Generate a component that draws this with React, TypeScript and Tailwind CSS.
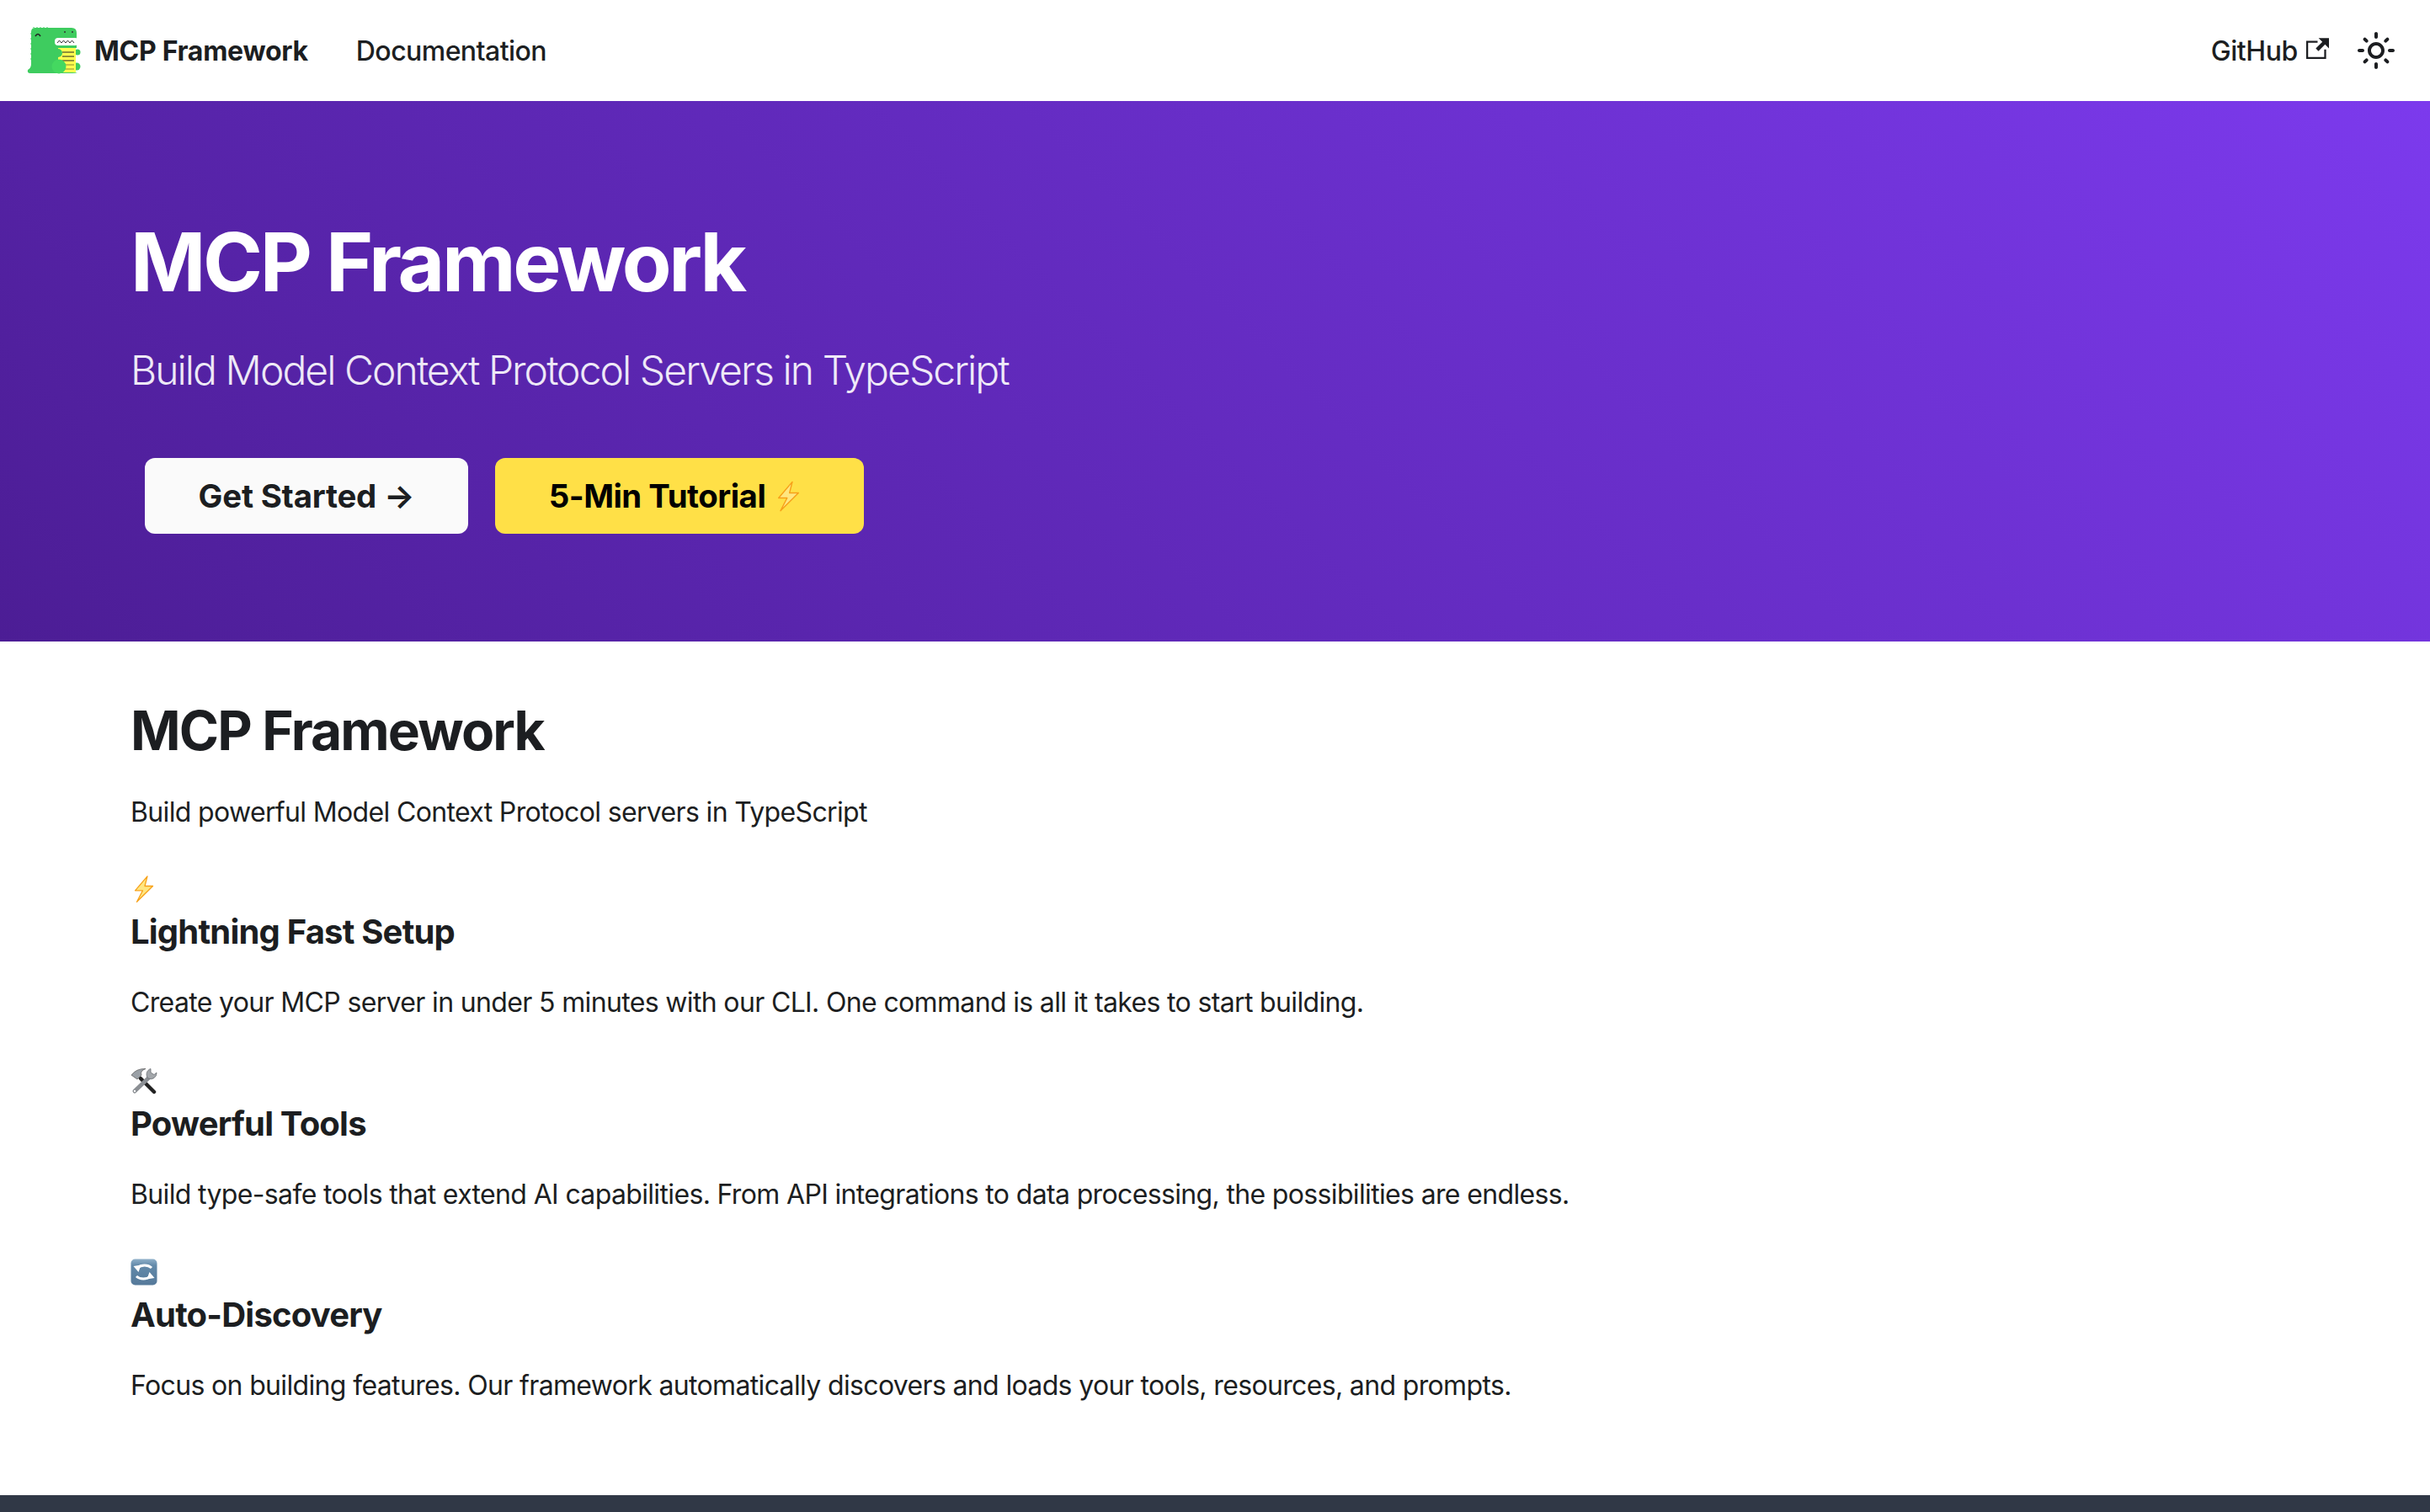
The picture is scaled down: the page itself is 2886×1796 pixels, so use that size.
const sunPath =
  "M12,9c1.65,0,3,1.35,3,3s-1.35,3-3,3s-3-1.35-3-3S10.35,9,12,9 M12,7c-2.76,0-5,2.24-5,5s2.24,5,5,5s5-2.24,5-5 S14.76,7,12,7L12,7z M2,13l2,0c0.55,0,1-0.45,1-1s-0.45-1-1-1l-2,0c-0.55,0-1,0.45-1,1S1.45,13,2,13z M20,13l2,0c0.55,0,1-0.45,1-1 s-0.45-1-1-1l-2,0c-0.55,0-1,0.45-1,1S19.45,13,20,13z M11,2v2c0,0.55,0.45,1,1,1s1-0.45,1-1V2c0-0.55-0.45-1-1-1S11,1.45,11,2z M11,20v2c0,0.55,0.45,1,1,1s1-0.45,1-1v-2c0-0.55-0.45-1-1-1C11.45,19,11,19.45,11,20z M5.99,4.58c-0.39-0.39-1.03-0.39-1.41,0 c-0.39,0.39-0.39,1.03,0,1.41l1.06,1.06c0.39,0.39,1.03,0.39,1.41,0s0.39-1.03,0-1.41L5.99,4.58z M18.36,16.95 c-0.39-0.39-1.03-0.39-1.41,0c-0.39,0.39-0.39,1.03,0,1.41l1.06,1.06c0.39,0.39,1.03,0.39,1.41,0c0.39-0.39,0.39-1.03,0-1.41 L18.36,16.95z M19.42,5.99c0.39-0.39,0.39-1.03,0-1.41c-0.39-0.39-1.03-0.39-1.41,0l-1.06,1.06c-0.39,0.39-0.39,1.03,0,1.41 s1.03,0.39,1.41,0L19.42,5.99z M7.05,18.36c0.39-0.39,0.39-1.03,0-1.41c-0.39-0.39-1.03-0.39-1.41,0l-1.06,1.06 c-0.39,0.39-0.39,1.03,0,1.41s1.03,0.39,1.41,0L7.05,18.36z";

function Logo() {
  return (
    <svg viewBox="0 0 64 56" className="w-[64px] h-[56px] shrink-0">
      <circle cx="60" cy="30" r="3.500" fill="#3ecc5f" />
      <circle cx="59" cy="47" r="4.500" fill="#3ecc5f" />
      <path d="M5 6 Q5 1 10 1 H53 Q59 1 59 7 V25 H38 V54 H60 Q58 55 54 55 H4 Q0 55 1 51 Q5 49 5 44 Z" fill="#3ecc5f" />
      <path d="M8 1v-1M12 1v-1M16 1v-1M20 1v-1M24 1v-1M5 8h-1M5 14h-1M5 20h-1M5 26h-1M5 32h-1M5 38h-1" stroke="#3ecc5f" strokeWidth="1" />
      <rect x="33" y="13" width="28" height="9" rx="4" fill="#fff" />
      <path d="M36 19 l2.500 -3 l2.500 3 l2.500 -3 l2.500 3 l2.500 -3 l2.500 3 l2.500 -3 l2.500 3" fill="none" stroke="#333" strokeWidth="1" />
      <path d="M10 11 Q13 6 16 11" fill="none" stroke="#222" strokeWidth="1.600" />
      <circle cx="45" cy="6" r="1" fill="#333" />
      <circle cx="54" cy="6" r="1" fill="#333" />
      <path d="M37 25 H58 V54 H37 Z" fill="#ffff50" />
      <path d="M42 30h14M42 35h14M42 40h14" stroke="#222" strokeWidth="1.200" />
      <path d="M44 45h12M44 50h12" stroke="#8a8a30" strokeWidth="1.200" />
      <circle cx="37" cy="31" r="5" fill="#3ecc5f" />
      <circle cx="38" cy="47" r="8.500" fill="#44d860" />
    </svg>
  );
}

function Bolt({ className }: { className: string }) {
  return (
    <svg viewBox="0 0 24 32" className={className}>
      <path
        d="M16 0.800 L1.500 17.800 H10.500 L3.500 31.300 L22.500 12.500 H13 Z"
        fill="#ffe680"
        stroke="#f7a11a"
        strokeWidth="1.300"
        strokeLinejoin="round"
      />
    </svg>
  );
}

function Tools() {
  return (
    <svg viewBox="0 0 32 32" className="w-[32px] h-[32px]">
      <path d="M12 13 L28 29" stroke="#222" strokeWidth="4.500" strokeLinecap="round" />
      <path d="M24 10 L5 28" stroke="#8b8f94" strokeWidth="5" strokeLinecap="round" />
      <circle cx="5" cy="28" r="1.200" fill="#fff" />
      <path d="M1 9 Q7 1 18 1.500 Q11 4 13 9 L8 14 Z" fill="#9aa0a6" stroke="#666" strokeWidth="0.800" />
      <path d="M21 13 A7 7 0 0 1 24 1.500 L24 6 L28 8.500 L31 6 A7 7 0 0 1 21 13 Z" fill="#a3a7ab" stroke="#6b6f73" strokeWidth="0.800" />
    </svg>
  );
}

function Refresh() {
  return (
    <svg viewBox="0 0 32 32" className="w-[32px] h-[32px]">
      <defs>
        <linearGradient id="tile" x1="0" y1="0" x2="0" y2="1">
          <stop offset="0" stopColor="#8fb0c9" />
          <stop offset="0.250" stopColor="#6289a9" />
          <stop offset="1" stopColor="#55799a" />
        </linearGradient>
      </defs>
      <rect x="0.500" y="0.500" width="31" height="31" rx="5" fill="url(#tile)" />
      <path d="M25 11 A10.500 8 0 0 0 8.500 11" fill="none" stroke="#fff" strokeWidth="3" />
      <path d="M3.500 9 L12.500 7.500 L9.500 16 Z" fill="#fff" />
      <path d="M7 21 A10.500 8 0 0 0 23.500 21" fill="none" stroke="#fff" strokeWidth="3" />
      <path d="M28.500 23 L19.500 24.500 L22.500 16 Z" fill="#fff" />
    </svg>
  );
}

const features = [
  {
    icon: <Bolt className="w-[24px] h-[32px] ml-[4px]" />,
    title: "Lightning Fast Setup",
    text: "Create your MCP server in under 5 minutes with our CLI. One command is all it takes to start building.",
  },
  {
    icon: <Tools />,
    title: "Powerful Tools",
    text: "Build type-safe tools that extend AI capabilities. From API integrations to data processing, the possibilities are endless.",
  },
  {
    icon: <Refresh />,
    title: "Auto-Discovery",
    text: "Focus on building features. Our framework automatically discovers and loads your tools, resources, and prompts.",
  },
];

export default function App() {
  return (
    <div className="min-h-[1796px] flex flex-col bg-white text-[#1c1e21] text-[32px] leading-[1.65] tracking-[-0.65px] font-['Inter',sans-serif]">
      <nav className="h-[120px] flex items-center justify-between pl-[32px] pr-[40px]">
        <div className="flex items-center">
          <Logo />
          <span className="ml-[16px] mt-[3px] font-bold tracking-[-0.28px]">MCP Framework</span>
          <span className="ml-[57px] mt-[3px] font-medium tracking-[-0.55px]">Documentation</span>
        </div>
        <div className="flex items-center">
          <span className="mt-[3px] font-medium tracking-[-0.4px]">GitHub</span>
          <svg viewBox="0 0 24 24" className="w-[27px] h-[27px] ml-[10px] mb-[4px]" fill="currentColor">
            <path d="M21 13v10h-21v-19h12v2h-10v15h17v-8h2zm3-12h-10.988l4.035 4-6.977 7.07 2.828 2.828 6.977-7.07 4.125 4.172v-11z" />
          </svg>
          <svg viewBox="0 0 24 24" className="w-[48px] h-[48px] ml-[32px]" fill="currentColor">
            <path d={sunPath} />
          </svg>
        </div>
      </nav>

      <header className="h-[642px] bg-[linear-gradient(45deg,#4c1d95,#7c3aed)] px-[155px] pt-[131px] text-white">
        <h1 className="text-[96px] leading-[1.25] font-bold tracking-[-3.35px]">MCP Framework</h1>
        <p className="mt-[35px] text-[48px] leading-[1.4] font-light text-white/90 tracking-[-1.94px]">
          Build Model Context Protocol Servers in TypeScript
        </p>
        <div className="mt-[71px] flex gap-[32px] pl-[17px]">
          <a className="h-[90px] w-[384px] flex items-center justify-center rounded-[12px] bg-[#fafafa] text-[#1c1e21] text-[38.400px] font-bold tracking-[-0.2px]">
            Get Started →
          </a>
          <a className="h-[90px] w-[438px] flex items-center justify-center gap-[14px] pr-[12px] rounded-[12px] bg-[#ffe047] text-black text-[38.400px] font-bold tracking-[-0.5px]">
            5-Min Tutorial
            <Bolt className="w-[27px] h-[37px]" />
          </a>
        </div>
      </header>

      <main className="flex-1 px-[155px] pt-[66px]">
        <h2 className="text-[64px] leading-[1.25] font-bold tracking-[-1.85px]">MCP Framework</h2>
        <p className="mt-[31px] mb-[38px]">Build powerful Model Context Protocol servers in TypeScript</p>
        {features.map(({ title, text, icon }) => (
          <section key={title} className="mb-[40px]">
            <div className="h-[52px] flex items-center">{icon}</div>
            <h3 className="text-[40px] leading-[1.25] font-bold tracking-[-0.8px] mb-[33px]">{title}</h3>
            <p>{text}</p>
          </section>
        ))}
      </main>

      <footer className="h-[20px] bg-[#303846]" />
    </div>
  );
}
